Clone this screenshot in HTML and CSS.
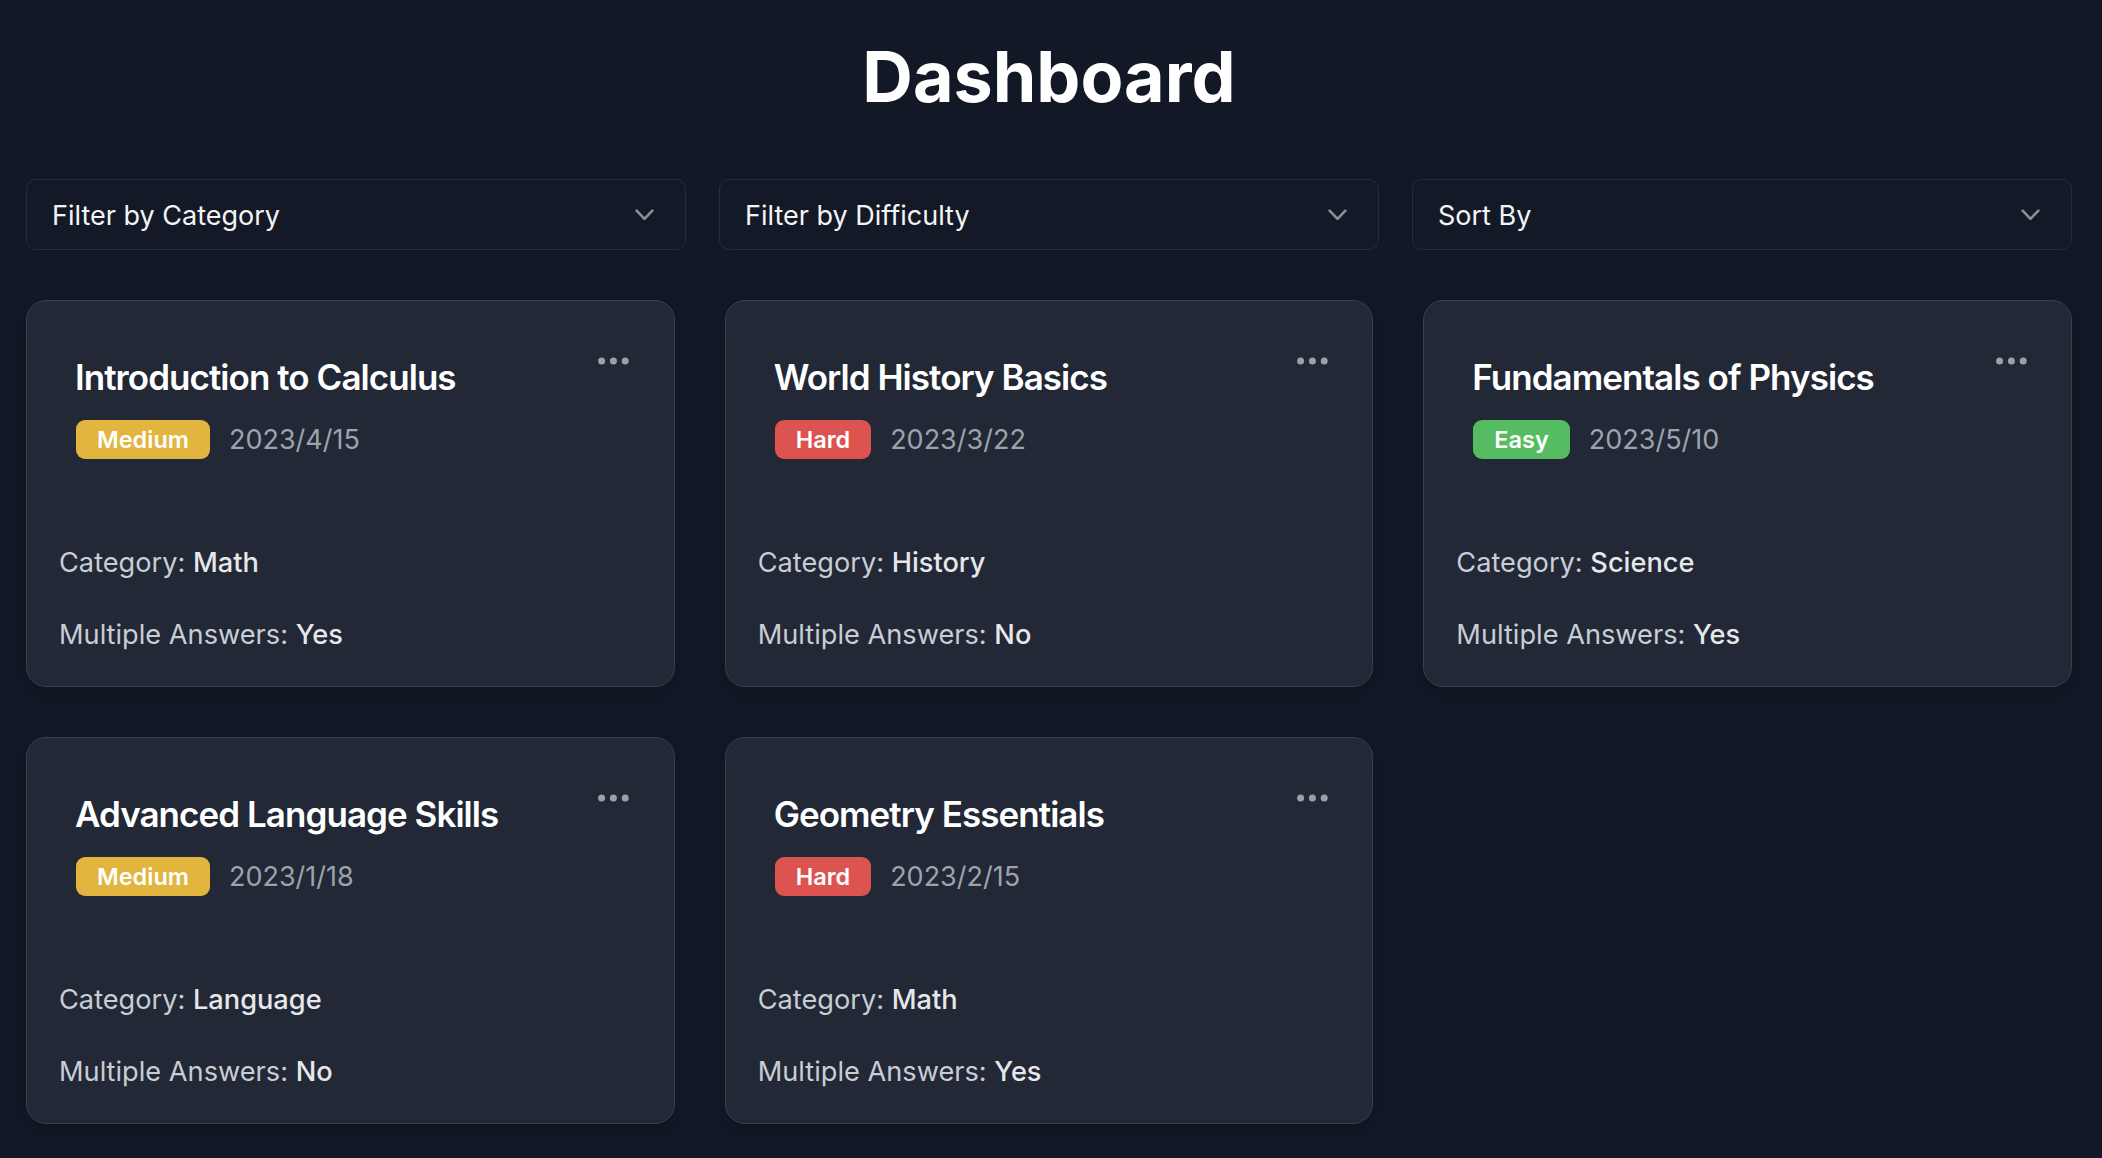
FILE: index.html
```html
<!DOCTYPE html>
<html lang="en">
<head>
<meta charset="utf-8">
<title>Dashboard</title>
<link rel="stylesheet" href="styles.css">
</head>
<body>
<main class="page">
  <h1 class="page-title">Dashboard</h1>

  <div class="filters">
    <div class="select"><span>Filter by Category</span><svg class="chev" width="19" height="12" viewBox="0 0 19 12"><path d="M1.6 1.6 L9.5 9.8 L17.4 1.6" fill="none" stroke="#8a8f99" stroke-width="2.6" stroke-linecap="round" stroke-linejoin="round"/></svg></div>
    <div class="select"><span>Filter by Difficulty</span><svg class="chev" width="19" height="12" viewBox="0 0 19 12"><path d="M1.6 1.6 L9.5 9.8 L17.4 1.6" fill="none" stroke="#8a8f99" stroke-width="2.6" stroke-linecap="round" stroke-linejoin="round"/></svg></div>
    <div class="select"><span>Sort By</span><svg class="chev" width="19" height="12" viewBox="0 0 19 12"><path d="M1.6 1.6 L9.5 9.8 L17.4 1.6" fill="none" stroke="#8a8f99" stroke-width="2.6" stroke-linecap="round" stroke-linejoin="round"/></svg></div>
  </div>

  <section class="cards">
    <article class="card">
      <div class="card-head">
        <div class="head-row">
          <h2 class="card-title">Introduction to Calculus</h2>
          <svg class="dots" width="31" height="8" viewBox="0 0 31 8"><circle cx="3.6" cy="4" r="3.5"/><circle cx="15.4" cy="4" r="3.5"/><circle cx="27.2" cy="4" r="3.5"/></svg>
        </div>
        <div class="meta"><span class="badge medium">Medium</span><span class="date">2023/4/15</span></div>
      </div>
      <div class="info">
        <p class="line">Category: <strong>Math</strong></p>
        <p class="line">Multiple Answers: <strong>Yes</strong></p>
      </div>
    </article>

    <article class="card">
      <div class="card-head">
        <div class="head-row">
          <h2 class="card-title">World History Basics</h2>
          <svg class="dots" width="31" height="8" viewBox="0 0 31 8"><circle cx="3.6" cy="4" r="3.5"/><circle cx="15.4" cy="4" r="3.5"/><circle cx="27.2" cy="4" r="3.5"/></svg>
        </div>
        <div class="meta"><span class="badge hard">Hard</span><span class="date">2023/3/22</span></div>
      </div>
      <div class="info">
        <p class="line">Category: <strong>History</strong></p>
        <p class="line">Multiple Answers: <strong>No</strong></p>
      </div>
    </article>

    <article class="card">
      <div class="card-head">
        <div class="head-row">
          <h2 class="card-title">Fundamentals of Physics</h2>
          <svg class="dots" width="31" height="8" viewBox="0 0 31 8"><circle cx="3.6" cy="4" r="3.5"/><circle cx="15.4" cy="4" r="3.5"/><circle cx="27.2" cy="4" r="3.5"/></svg>
        </div>
        <div class="meta"><span class="badge easy">Easy</span><span class="date">2023/5/10</span></div>
      </div>
      <div class="info">
        <p class="line">Category: <strong>Science</strong></p>
        <p class="line">Multiple Answers: <strong>Yes</strong></p>
      </div>
    </article>

    <article class="card">
      <div class="card-head">
        <div class="head-row">
          <h2 class="card-title">Advanced Language Skills</h2>
          <svg class="dots" width="31" height="8" viewBox="0 0 31 8"><circle cx="3.6" cy="4" r="3.5"/><circle cx="15.4" cy="4" r="3.5"/><circle cx="27.2" cy="4" r="3.5"/></svg>
        </div>
        <div class="meta"><span class="badge medium">Medium</span><span class="date">2023/1/18</span></div>
      </div>
      <div class="info">
        <p class="line">Category: <strong>Language</strong></p>
        <p class="line">Multiple Answers: <strong>No</strong></p>
      </div>
    </article>

    <article class="card">
      <div class="card-head">
        <div class="head-row">
          <h2 class="card-title">Geometry Essentials</h2>
          <svg class="dots" width="31" height="8" viewBox="0 0 31 8"><circle cx="3.6" cy="4" r="3.5"/><circle cx="15.4" cy="4" r="3.5"/><circle cx="27.2" cy="4" r="3.5"/></svg>
        </div>
        <div class="meta"><span class="badge hard">Hard</span><span class="date">2023/2/15</span></div>
      </div>
      <div class="info">
        <p class="line">Category: <strong>Math</strong></p>
        <p class="line">Multiple Answers: <strong>Yes</strong></p>
      </div>
    </article>
  </section>
</main>
</body>
</html>
```

FILE: styles.css
```css
* { box-sizing: border-box; }

html, body {
  margin: 0;
  padding: 0;
  background: #121826;
}

body {
  font-family: Inter, "Noto Sans", "Liberation Sans", sans-serif;
  color: #f3f4f6;
  min-height: 1158px;
}

.page {
  padding: 35px 30px 40px 26px;
}

.page-title {
  margin: 0;
  text-align: center;
  font-size: 70px;
  line-height: 83px;
  font-weight: 700;
  color: #ffffff;
  letter-spacing: 0;
}

.filters {
  margin-top: 61px;
  display: grid;
  grid-template-columns: repeat(3, 1fr);
  column-gap: 33px;
}

.select {
  height: 71px;
  border: 1.5px solid #272c37;
  border-radius: 10px;
  background: #131926;
  display: flex;
  align-items: center;
  justify-content: space-between;
  padding: 2px 31px 0 25px;
  font-size: 27px;
  color: #f3f4f6;
}

.chev { display: block; margin-top: -2px; }

.cards {
  margin-top: 50px;
  display: grid;
  grid-template-columns: repeat(3, 1fr);
  column-gap: 50px;
  row-gap: 50px;
}

.card {
  background: #222835;
  border: 1.5px solid #383f4d;
  border-radius: 20px;
  padding: 32px 32px 31px;
  box-shadow: 0 6px 18px rgba(0, 0, 0, 0.18);
}

.card-head {
  padding: 16px 16px 16px 16px;
}

.head-row {
  display: flex;
  justify-content: space-between;
  align-items: flex-start;
}

.card-title {
  margin: 7px 0 0 0;
  font-size: 35px;
  line-height: 42px;
  font-weight: 600;
  letter-spacing: -0.95px;
  color: #ffffff;
}

.dots {
  display: block;
  margin-top: 7.5px;
  margin-right: -3.5px;
  fill: #9ca0ab;
  flex: none;
}

.meta {
  margin-top: 22px;
  margin-left: 1px;
  display: flex;
  align-items: center;
  gap: 19px;
}

.badge {
  display: inline-flex;
  align-items: center;
  height: 39px;
  padding: 0 21px;
  border-radius: 9px;
  font-size: 23.5px;
  font-weight: 600;
  color: #ffffff;
}

.badge.medium { background: #e1b53e; }
.badge.hard { background: #dc534f; }
.badge.easy { background: #56bc62; }

.date {
  font-size: 27px;
  color: #9ca3af;
}

.info {
  margin-top: 68px;
  display: flex;
  flex-direction: column;
  gap: 31px;
}

.line {
  margin: 0;
  font-size: 27.2px;
  line-height: 40.5px;
  color: #c9cdd5;
}

.line strong {
  font-weight: 500;
  color: #e5e7eb;
}
```
